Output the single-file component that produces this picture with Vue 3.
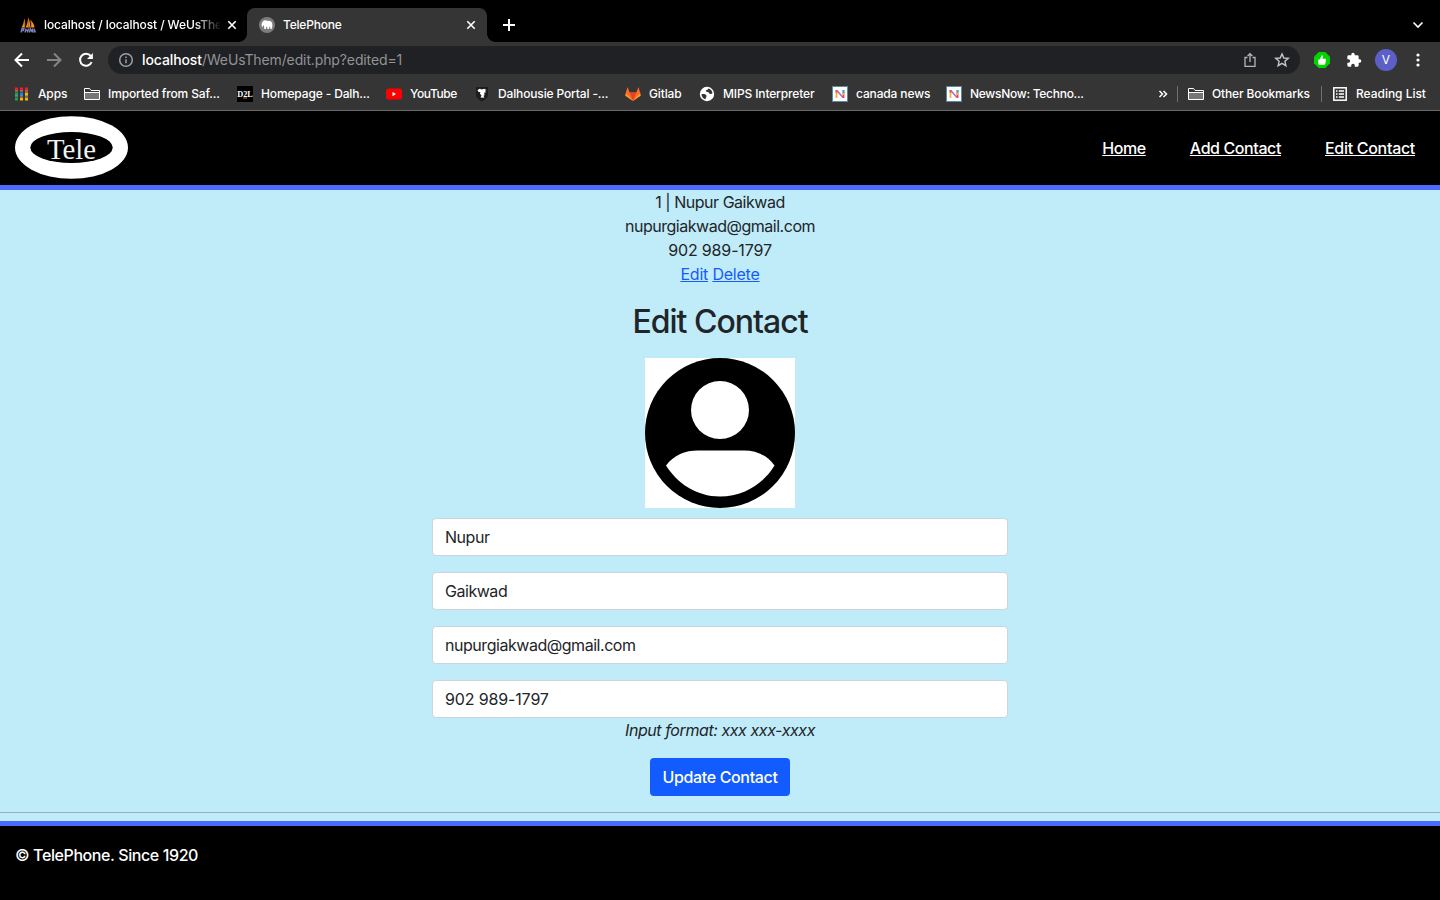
<script setup>
import { ref } from 'vue'

const bookmarks = [
  { icon: 'apps', label: 'Apps' },
  { icon: 'folder', label: 'Imported from Saf...' },
  { icon: 'd2l', label: 'Homepage - Dalh...' },
  { icon: 'youtube', label: 'YouTube' },
  { icon: 'shield', label: 'Dalhousie Portal -...' },
  { icon: 'gitlab', label: 'Gitlab' },
  { icon: 'globe', label: 'MIPS Interpreter' },
  { icon: 'news', label: 'canada news' },
  { icon: 'news', label: 'NewsNow: Techno...' },
]
const appDots = ['#ff1a1a', '#ff1a1a', '#ff1a1a', '#12a84f', '#0a84ff', '#fdb300', '#12a84f', '#fdb300', '#fdb300']
const fields = ref(['Nupur', 'Gaikwad', 'nupurgiakwad@gmail.com', '902 989-1797'])
</script>

<template>
  <div class="window">
    <div class="tabs">
      <div class="tab first">
        <svg class="fav" viewBox="0 0 16 16">
          <path d="M1.500 10.500C3 8 4 5 4.300 1.500 5.500 5 5.500 8 4.800 10.500zM5.600 10.500C7.300 7 8 4 8 .5c2 3.500 2.500 7 1.800 10zM10.500 10.500c.8-3 .6-5-.4-8 2.700 2.500 4 5 4.500 8z" fill="#f7931e"/>
          <path d="M4.300 2v8.500M8.300 1v9.500M11 3.500v7" stroke="#8a4b12" stroke-width=".6"/>
          <path d="M1 15.500l1-4h2l-.7 2H2M5 15.500l1-4M5.500 13.500h2.500M7.500 15.500l1-4M9.300 15.500l1-4 1 2.500 1.500-2.500-.4 4M14 15.500l.3-3.500 1 3.500" fill="none" stroke="#7d80b8" stroke-width="1.300"/>
        </svg>
        <span class="tab-title fade">localhost / localhost / WeUsThe</span>
        <svg class="close" viewBox="0 0 10 10"><path d="M1.300 1.300l7.400 7.400M8.700 1.300L1.300 8.700"/></svg>
      </div>
      <div class="tab active">
        <svg class="fav" viewBox="0 0 16 16">
          <circle cx="8" cy="8" r="8" fill="#7d7d7d"/>
          <path d="M2.500 8.500C2.600 5 4.500 3.200 6.600 3.300c.8 0 1.300.4 1.700.6 2-.8 4.800.2 5 3.200.1 2-.1 3.200-.3 4.600h-1.700l-.3-2.300-.8.500V12H8.500l-.4-2.200-1 .3V12H5.300L5 8.800l-.8-.5-.5 1.900z" fill="#fff"/>
        </svg>
        <span class="tab-title">TelePhone</span>
        <svg class="close" viewBox="0 0 10 10"><path d="M1.300 1.300l7.400 7.400M8.700 1.300L1.300 8.700"/></svg>
      </div>
      <svg class="plus" viewBox="0 0 12 12"><path d="M6 0v12M0 6h12"/></svg>
      <svg class="chevron" viewBox="0 0 12 8"><path d="M1.500 1.500L6 6l4.500-4.500"/></svg>
    </div>

    <div class="toolbar">
      <svg class="nav-icon" viewBox="0 0 16 16"><path d="M15 8H2M8 1.500L1.500 8 8 14.500"/></svg>
      <svg class="nav-icon dim" viewBox="0 0 16 16"><path d="M1 8h13M8 1.500L14.500 8 8 14.500"/></svg>
      <svg class="nav-icon" viewBox="0 0 16 16"><path d="M13.600 10.200a6 6 0 1 1-.8-6.100L14 5.500"/><path d="M14.900 1v6H9z" class="solid"/></svg>
      <div class="address">
        <svg class="info" viewBox="0 0 16 16"><circle cx="8" cy="8" r="6.300"/><path d="M8 7.200v4M8 4.400v1.500"/></svg>
        <span class="url"><b>localhost</b>/WeUsThem/edit.php?edited=1</span>
        <svg class="share" viewBox="0 0 14 16"><path d="M4.500 5.500H2v8.800h10V5.500H9.500M7 10V1.800M4.600 4L7 1.600 9.400 4"/></svg>
        <svg class="star" viewBox="0 0 16 16"><path d="M8 1.900l1.800 4.100 4.500.4-3.400 2.900 1 4.400L8 11.400l-3.900 2.300 1-4.400L1.700 6.400l4.500-.4z"/></svg>
      </div>
      <svg class="ext" viewBox="0 0 16 16">
        <path d="M4.700 0h6.600L16 4.700v6.600L11.300 16H4.700L0 11.300V4.700z" fill="#00d500"/>
        <path d="M4.300 7.500h1.500L7.700 3.300c1-.2 1.400.7 1.200 1.600l-.3 1.800h2.500c.8 0 1 .7.900 1.300l-.7 3.800c-.1.700-.5 1-1.200 1H5.300l-1-.5z" fill="#fff"/>
      </svg>
      <svg class="puzzle" viewBox="0 0 24 24"><path d="M20.500 11H19V7a2 2 0 0 0-2-2h-4V3.500a2.500 2.500 0 0 0-5 0V5H4a2 2 0 0 0-2 2v3.800h1.500a2.700 2.700 0 0 1 0 5.400H2V20a2 2 0 0 0 2 2h3.800v-1.500a2.700 2.700 0 0 1 5.400 0V22H17a2 2 0 0 0 2-2v-4h1.500a2.500 2.500 0 0 0 0-5z"/></svg>
      <span class="avatar">V</span>
      <svg class="dots" viewBox="0 0 4 14"><circle cx="2" cy="2" r="1.600"/><circle cx="2" cy="7" r="1.600"/><circle cx="2" cy="12" r="1.600"/></svg>
    </div>

    <div class="bookmarks">
      <div class="bm-list">
        <div v-for="(b, i) in bookmarks" :key="i" class="bm" :class="'bm-' + i">
          <svg v-if="b.icon === 'apps'" viewBox="0 0 16 16">
            <rect v-for="(c, n) in appDots" :key="n" :x="1 + (n % 3) * 5" :y="1.500 + Math.floor(n / 3) * 5" width="3" height="3" :fill="c"/>
            <path d="M1 5h3M6 5h3M11 5h3M1 10h3M6 10h3M11 10h3" stroke="#c4c4c4" stroke-width=".8"/>
          </svg>
          <svg v-else-if="b.icon === 'folder'" viewBox="0 0 16 16"><path d="M.5 13.500v-11h5l1.500 2h8.500v9z" fill="#353535" stroke="#fff"/><path d="M1 7h14v6H1z" fill="#777"/><path d="M1 6.500h14" stroke="#fff"/></svg>
          <svg v-else-if="b.icon === 'd2l'" viewBox="0 0 16 16"><rect width="16" height="16" fill="#000"/><text x=".2" y="10.800" class="d2l" textLength="15.600" lengthAdjust="spacingAndGlyphs">D2L</text><path d="M6 12h4" stroke="#d5701e"/></svg>
          <svg v-else-if="b.icon === 'youtube'" viewBox="0 0 16 16"><rect y="2.500" width="16" height="11" rx="2.800" fill="#f00"/><path d="M6.500 6v4.200l3.500-2.100z" fill="#fff"/></svg>
          <svg v-else-if="b.icon === 'shield'" viewBox="0 0 16 16"><path d="M2 1h12v8c0 3-3.500 5-6 6.500C5.500 14 2 12 2 9z" fill="#1c1c20"/><path d="M3.500 4l2.300-1.200 2 .8 2.300-.8L12.500 4l-1.500.7 1 1.500-1.800.5.3 2.600-1 .4.800 2-3.800-.1 1-2L5.800 7.500l.7-1.200-2.300-.6z" fill="#fff"/></svg>
          <svg v-else-if="b.icon === 'gitlab'" viewBox="0 0 16 16"><path d="M8 15L0 9.200 2.600 1l2 5.500h6.800l2-5.500L16 9.200z" fill="#fc6d26"/><path d="M8 15L4.600 6.500h6.800z" fill="#e24329"/><path d="M8 15L.5 9.700l.7-2z M8 15l7.500-5.300-.7-2z" fill="#fca326"/></svg>
          <svg v-else-if="b.icon === 'globe'" viewBox="0 0 16 16"><circle cx="8" cy="8" r="7.200" fill="#fff"/><path d="M2.500 8.200c3-.4 4.600.3 5 1.500.3 1-.9 1.600-.9 3.600-2.500-.6-4-2.600-4.100-5.100zM9.300 2.500c-.2 1.300-1.400 1.200-2.200 1.700-.7.500.1 1.700 1.400 1.700 1.600 0 1.500 2 3 2.100 1 .1 1.500-.3 2-.9-.3-2.300-2-4.100-4.200-4.600z" fill="#353535"/></svg>
          <svg v-else viewBox="0 0 16 16"><rect x=".5" y=".5" width="15" height="15" fill="#fff" stroke="#5c87a5"/><path d="M4.500 12V4" stroke="#f3b526" stroke-width="1.800"/><path d="M4.500 6.500V4" stroke="#ef4137" stroke-width="1.800"/><path d="M4.800 4.500L11 11.500" stroke="#b06bc5" stroke-width="1.600"/><path d="M11.500 12V4" stroke="#f23c55" stroke-width="1.800"/><path d="M11.500 9V7" stroke="#f3b526" stroke-width="1.800"/><path d="M11.500 7V4" stroke="#22b8dd" stroke-width="1.800"/></svg>
          <span>{{ b.label }}</span>
        </div>
      </div>
      <svg class="more" viewBox="0 0 10 8"><path d="M1.500 1l3 3-3 3M5.500 1l3 3-3 3"/></svg>
      <i class="sep"></i>
      <div class="bm other">
        <svg viewBox="0 0 16 16"><path d="M.5 13.500v-11h5l1.500 2h8.500v9z" fill="#353535" stroke="#fff"/><path d="M1 7h14v6H1z" fill="#777"/><path d="M1 6.500h14" stroke="#fff"/></svg>
        <span>Other Bookmarks</span>
      </div>
      <i class="sep"></i>
      <div class="bm reading">
        <svg viewBox="0 0 16 16"><rect x="1.800" y="1.800" width="12.400" height="12.400" fill="none" stroke="#fff" stroke-width="1.500"/><path d="M4 5h1.500M4 8h1.500M4 11h1.500M6.800 5h5.200M6.800 8h5.200M6.800 11h5.200" stroke="#fff" stroke-width="1.400"/></svg>
        <span>Reading List</span>
      </div>
    </div>

    <header class="site-header">
      <svg class="logo" viewBox="0 0 114 64">
        <ellipse cx="57.500" cy="32.500" rx="56.500" ry="31.300" fill="#fff"/>
        <ellipse cx="57.500" cy="32.500" rx="41.200" ry="15.500" fill="#000"/>
        <text x="33" y="43.500" textLength="49" lengthAdjust="spacingAndGlyphs">Tele</text>
      </svg>
      <nav>
        <a>Home</a><a>Add Contact</a><a>Edit Contact</a>
      </nav>
    </header>

    <main>
      <div class="name">1 | Nupur Gaikwad</div>
      <div class="email">nupurgiakwad@gmail.com</div>
      <div class="phone">902 989-1797</div>
      <div class="actions"><a>Edit</a> <a>Delete</a></div>
      <h2>Edit Contact</h2>
      <svg class="portrait" viewBox="0 0 150 150">
        <rect width="150" height="150" fill="#fff"/>
        <circle cx="75" cy="75" r="75"/>
        <circle cx="75" cy="52" r="29" fill="#fff"/>
        <path d="M21 107.500C29 97 40 92.500 53 92.500h46c13 0 23 5 30.500 15C119 125 99 138.500 75 138.500S32 125 21 107.500z" fill="#fff"/>
      </svg>
      <form @submit.prevent>
        <input v-for="(f, i) in fields" :key="i" v-model="fields[i]" :class="'field-' + i" type="text">
        <em>Input format: xxx xxx-xxxx</em>
        <button type="submit">Update Contact</button>
      </form>
      <hr>
    </main>
    <footer>© TelePhone. Since 1920</footer>
  </div>
</template>

<style>
body { margin: 0; background: #000; overflow: hidden; }
</style>

<style scoped>
* { box-sizing: border-box; }
svg { display: block; flex: none; }
.window { width: 1440px; height: 900px; overflow: hidden; display: flex; flex-direction: column; font-family: Inter, "Liberation Sans", sans-serif; font-size: 16px; color: #212529; background: #000; }
.tabs { height: 42px; flex: none; display: flex; align-items: center; padding-top: 8px; }
.tab { height: 34px; display: flex; align-items: center; font-size: 12px; font-weight: 500; color: #fff; }
.first { width: 247px; padding: 0 10px 0 20px; }
.active { width: 240px; padding: 0 11px 0 12px; background: #353535; border-radius: 8px 8px 0 0; position: relative; }
.active::before, .active::after { content: ''; position: absolute; bottom: 0; width: 8px; height: 8px; }
.active::before { left: -8px; background: radial-gradient(circle at 0 0, transparent 7.500px, #353535 8px); }
.active::after { right: -8px; background: radial-gradient(circle at 100% 0, transparent 7.500px, #353535 8px); }
.fav { width: 16px; height: 16px; margin-right: 8px; }
.tab-title { flex: 1; white-space: nowrap; letter-spacing: -.2px; padding-bottom: 2px; }
.fade { flex: none; width: 176px; margin-right: 7px; letter-spacing: -.1px; mask-image: linear-gradient(90deg, #000 150px, transparent 178px); }
.close { width: 10px; height: 10px; fill: none; stroke: #fff; stroke-width: 1.600; }
.plus { width: 12px; height: 12px; margin-left: 16px; stroke: #fff; stroke-width: 2; }
.chevron { width: 12px; height: 8px; margin-left: auto; margin-right: 16px; fill: none; stroke: #fff; stroke-width: 1.600; }
.toolbar { height: 36px; flex: none; background: #353535; display: flex; align-items: center; padding: 0 0 0 14px; }
.nav-icon { width: 16px; height: 16px; margin-right: 16px; fill: none; stroke: #fff; stroke-width: 2; }
.dim { stroke: #858585; }
.solid { fill: #fff; stroke: none; }
.address { width: 1192px; flex: none; height: 28px; margin-left: -2px; border-radius: 14px; background: #202124; display: flex; align-items: center; padding: 0 10px; }
.info { width: 16px; height: 16px; fill: none; stroke: #9aa0a6; stroke-width: 1.500; }
.url { flex: 1; margin-left: 8px; padding-bottom: 1px; font-size: 14px; color: #929395; white-space: nowrap; letter-spacing: -.12px; }
.url b { color: #fff; font-weight: 500; letter-spacing: -.1px; }
.share { width: 14px; height: 16px; margin-right: 17px; fill: none; stroke: #b5b5b5; stroke-width: 1.300; }
.star { width: 16px; height: 16px; fill: none; stroke: #c5c5c5; stroke-width: 1.400; }
.ext { width: 16px; height: 16px; margin-left: 14px; }
.puzzle { width: 16px; height: 16px; margin-left: 16px; fill: #fff; }
.avatar { width: 22px; height: 22px; margin-left: 13px; border-radius: 50%; background: #5b5fc7; color: #fff; font-size: 12px; line-height: 22px; text-align: center; }
.dots { width: 4px; height: 14px; margin-left: 19px; fill: #fff; }
.bookmarks { height: 33px; flex: none; background: #353535; border-bottom: 1px solid #6a6a6a; display: flex; align-items: center; padding-left: 14px; color: #fff; font-size: 12px; font-weight: 500; }
.bm-list { width: 1144px; flex: none; display: grid; grid-template-columns: 70px 153px 149px 88px 151px 74px 133px 114px 140px; }
.bm { display: flex; align-items: center; gap: 8px; white-space: nowrap; letter-spacing: -.14px; }
.bm span { padding-bottom: 2px; }
.bm svg { width: 16px; height: 16px; }
.bm-3 { letter-spacing: -.4px; }
.bm-8 { letter-spacing: -.28px; }
.d2l { font: bold 8px "Liberation Serif", serif; letter-spacing: 0; fill: #fff; }
.more { width: 10px; height: 8px; fill: none; stroke: #fff; stroke-width: 1.500; }
.sep { width: 1px; height: 16px; background: #707070; margin: 0 10px 0 9px; }
.other { width: 124px; }
.reading { letter-spacing: -.03px; }
.site-header { height: 79px; flex: none; background: #000; border-bottom: 5px solid #4d69ff; display: flex; justify-content: space-between; padding: 4px 25px 0 14px; }
.logo { width: 114px; height: 64px; }
.logo text { font: 29px "Liberation Serif", serif; fill: #f3f3f3; }
nav { display: flex; gap: 44px; padding-top: 21px; }
nav a { color: #fff; line-height: 24px; text-decoration: underline; font-weight: 500; letter-spacing: -.4px; }
nav a:last-child { letter-spacing: -.3px; }
main { height: 631px; flex: none; background: #c0ebf8; text-align: center; line-height: 24px; letter-spacing: -.3px; }
.name { letter-spacing: -.47px; }
.email { letter-spacing: -.48px; }
.phone { letter-spacing: -.15px; }
.actions { letter-spacing: -.22px; }
.actions a { color: #125bff; text-decoration: underline; }
h2 { margin: 16px 0; font-size: 32px; font-weight: 500; line-height: 40px; letter-spacing: -1px; }
.portrait { width: 150px; height: 150px; margin: 0 auto 10px; }
form { width: 576px; margin: 0 auto; display: flex; flex-direction: column; align-items: center; }
input { width: 576px; height: 38px; margin: 0 0 16px; padding: 6px 12px; border: 1px solid #ced4da; border-radius: 4px; background: #fff; color: #212529; font: inherit; letter-spacing: -.46px; outline: none; }
.field-3 { margin-bottom: 0; letter-spacing: -.14px; }
em { letter-spacing: -.42px; }
button { height: 38px; width: 140px; margin-top: 16px; padding: 0; border: 0; border-radius: 4px; background: #125bff; color: #fff; font: inherit; font-weight: 500; letter-spacing: -.35px; }
hr { height: 1px; margin: 16px 0 8px; border: 0; background: #212529; opacity: .3; }
footer { flex: 1; background: #000; border-top: 5px solid #4d69ff; padding: 17px 15px; color: #fff; font-weight: 500; line-height: 24px; letter-spacing: -.4px; }
</style>
